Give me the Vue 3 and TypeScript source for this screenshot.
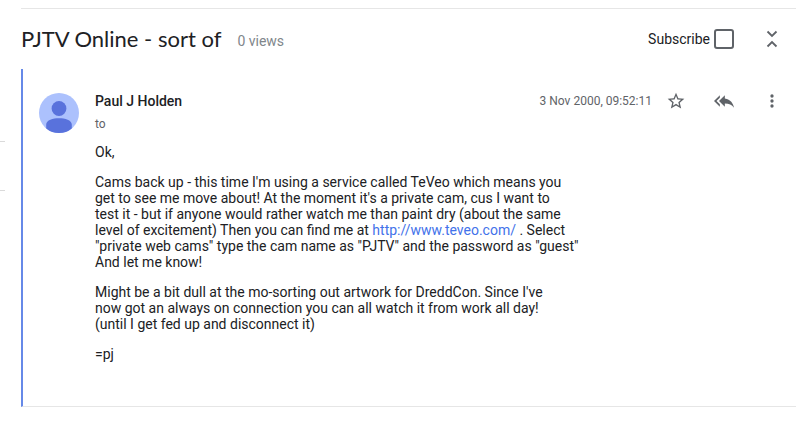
<script setup lang="ts">
import { ref } from 'vue'

const subscribed = ref(false)
const paragraphs: string[][] = [
  ["Might be a bit dull at the mo-sorting out artwork for DreddCon. Since I've", 'now got an always on connection you can all watch it from work all day!', '(until I get fed up and disconnect it)'],
  ['=pj'],
]
</script>

<template>
  <main class="page">
    <aside class="rail"><span></span><span></span></aside>
    <section class="thread">
      <header class="head">
        <h1>PJTV Online - sort of</h1>
        <span class="views">0 views</span>
        <label class="subscribe">Subscribe<input v-model="subscribed" type="checkbox" /></label>
        <button class="icon" aria-label="Collapse all">
          <svg width="24" height="24" viewBox="0 0 24 24"><path d="M7.500 4.500 12 9l4.500-4.500M7.500 19.500 12 15l4.500 4.500" fill="none" stroke="#5f6368" stroke-width="1.800" /></svg>
        </button>
      </header>
      <article class="message">
        <svg class="avatar" width="40" height="40" viewBox="0 0 40 40"><circle cx="20" cy="20" r="20" fill="#acc1fd" /><circle cx="20" cy="15.500" r="7.400" fill="#5972dc" /><path d="M7.200 35.400V31.500C7.200 27 14 25.200 20 25.200s12.800 1.800 12.800 6.300v3.900A20 20 0 0 1 20 40 20 20 0 0 1 7.200 35.400z" fill="#5972dc" /></svg>
        <div class="content">
          <div class="meta">
            <h2>Paul J Holden</h2>
            <time>3 Nov 2000, 09:52:11</time>
            <button class="icon star" aria-label="Star"><svg width="20" height="20" viewBox="0 0 24 24"><path fill="#5f6368" d="M22 9.240l-7.190-.62L12 2 9.190 8.630 2 9.240l5.460 4.730L5.820 21 12 17.270 18.180 21l-1.630-7.030L22 9.240zM12 15.400l-3.760 2.270 1-4.280-3.320-2.880 4.380-.38L12 6.100l1.710 4.040 4.380.38-3.320 2.880 1 4.280L12 15.400z" /></svg></button>
            <button class="icon" aria-label="Reply all"><svg width="20" height="20" viewBox="0 0 24 24"><path fill="#5f6368" d="M7 8V5l-7 7 7 7v-3l-4-4 4-4zm6 1V5l-7 7 7 7v-4.100c5 0 8.500 1.600 11 5.100-1-5-4-10-11-11z" /></svg></button>
            <button class="icon" aria-label="More options"><svg width="20" height="20" viewBox="0 0 24 24"><path fill="#5f6368" d="M12 8a2 2 0 1 0 0-4 2 2 0 0 0 0 4zm0 2a2 2 0 1 0 0 4 2 2 0 0 0 0-4zm0 6a2 2 0 1 0 0 4 2 2 0 0 0 0-4z" /></svg></button>
          </div>
          <div class="to">to</div>
          <div class="body">
            <p>Ok,</p>
            <p>Cams back up - this time I'm using a service called TeVeo which means you<br />get to see me move about! At the moment it's a private cam, cus I want to<br />test it - but if anyone would rather watch me than paint dry (about the same<br />level of excitement) Then you can find me at <a href="http://www.teveo.com/">http://www.teveo.com/</a> . Select<br />"private web cams" type the cam name as "PJTV" and the password as "guest"<br />And let me know!</p>
            <p v-for="(lines, i) in paragraphs" :key="i"><template v-for="(line, j) in lines" :key="j"><br v-if="j > 0" />{{ line }}</template></p>
          </div>
        </div>
      </article>
    </section>
  </main>
</template>

<style>
body { background: #fff; }
</style>

<style scoped>
.page { display: flex; font-family: Roboto, "Liberation Sans", sans-serif; color: #202124; }
.rail { width: 5px; margin-right: 16px; padding-top: 141px; flex: none; }
.rail span { display: block; height: 48px; border-top: 1px solid #dadada; }
.thread { flex: 1; min-width: 0; margin-top: 8px; border-top: 1px solid #e6e6e6; }
.head { display: flex; align-items: center; height: 60px; padding-right: 12px; }
h1 { margin: 0; font-family: Lato, Roboto, sans-serif; font-size: 22px; line-height: 28px; font-weight: 400; white-space: nowrap; }
.views { margin: 4px auto 0 16px; font-size: 14px; line-height: 20px; color: #80868b; }
.subscribe { display: flex; align-items: center; gap: 4px; font-size: 14px; line-height: 16px; margin-right: 26px; }
.subscribe input { appearance: none; box-sizing: border-box; width: 20px; height: 20px; margin: 0; border: 2px solid #5f6368; border-radius: 3px; background: #fff; }
.subscribe input:checked { background: #5f6368; }
.icon { display: flex; align-items: center; justify-content: center; width: 24px; height: 24px; padding: 0; border: 0; background: none; flex: none; }
.message { display: flex; gap: 16px; padding: 20px 12px 44px 16px; border-left: 2px solid #6689e8; border-bottom: 1px solid #e6e6e6; }
.avatar { flex: none; margin-top: 4px; }
.content { flex: 1; min-width: 0; }
.meta { display: flex; align-items: center; gap: 24px; }
h2 { margin: 0 auto 0 0; font-size: 14px; line-height: 20px; font-weight: 500; }
time { font-size: 12px; line-height: 16px; color: #5f6368; margin-right: -12px; }
.to { font-size: 12px; line-height: 16px; margin-top: 3px; color: #5f6368; }
.body { margin-top: 12px; font-size: 14px; line-height: 16px; }
p { margin: 0 0 14px; }
p:last-child { margin-bottom: 0; }
a { color: #4272ea; text-decoration: none; }
</style>
